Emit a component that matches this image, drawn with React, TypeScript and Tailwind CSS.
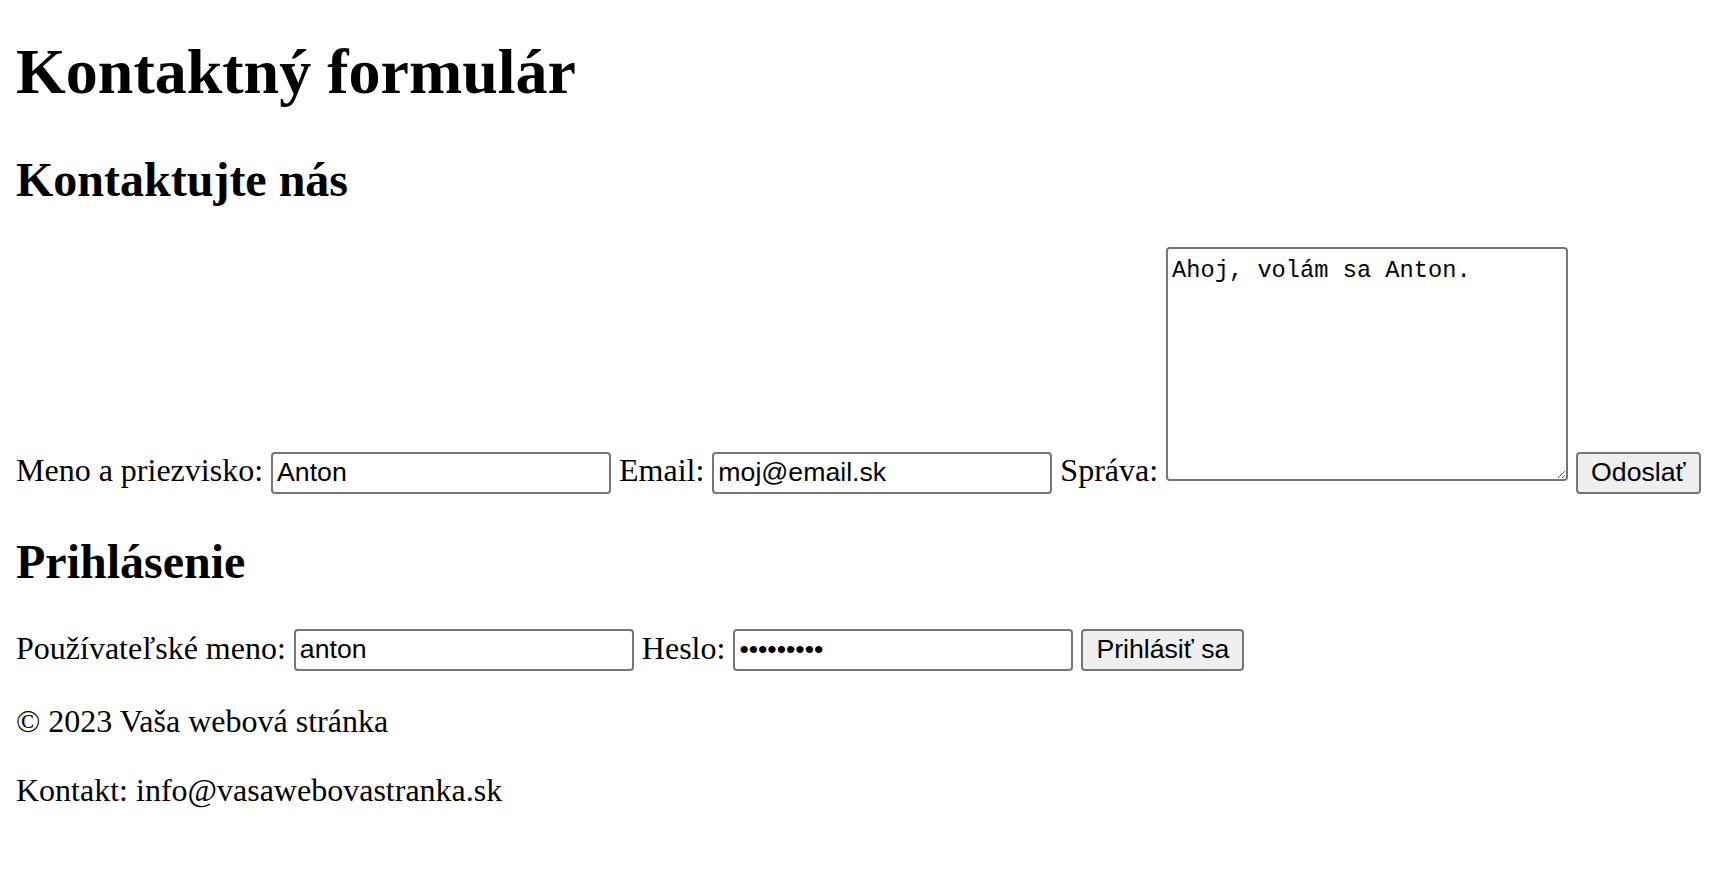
import React from "react";

const inputCls =
  "inline-block align-baseline w-[340px] h-[42px] border-2 border-[#767676] rounded-[4px] bg-white px-[4px] py-[2px] font-['Liberation_Sans',Arial,sans-serif] text-[26.67px] leading-[normal] text-black outline-none";

const btnCls =
  "inline-block align-baseline h-[42px] border-2 border-[#767676] rounded-[4px] bg-[#efefef] px-[13px] py-[2px] font-['Liberation_Sans',Arial,sans-serif] text-[26.67px] leading-[normal] text-black";

export default function App() {
  return (
    <div className="min-h-screen bg-white px-[16px] pb-[32px] font-['Liberation_Serif','Times_New_Roman',serif] text-[32px] leading-[normal] text-black">
      <h1 className="mt-[35px] mb-[43px] text-[64px] font-bold leading-[normal]">Kontaktný formulár</h1>
      <h2 className="mb-[40px] text-[48px] font-bold leading-[normal]">Kontaktujte nás</h2>
      <form onSubmit={(e) => e.preventDefault()}>
        <label htmlFor="meno">Meno a priezvisko:</label>{" "}
        <input id="meno" type="text" defaultValue="Anton" className={inputCls} />{" "}
        <label htmlFor="email">Email:</label>{" "}
        <input id="email" type="email" defaultValue="moj@email.sk" className={inputCls} />{" "}
        <label htmlFor="sprava">Správa:</label>{" "}
        <textarea
          id="sprava"
          defaultValue="Ahoj, volám sa Anton."
          className="inline-block align-baseline w-[402px] h-[234px] resize border-2 border-[#767676] rounded-[4px] bg-white px-[4px] pt-[8px] pb-[4px] font-['Liberation_Mono','DejaVu_Sans_Mono',monospace] text-[23.7px] leading-[normal] text-black outline-none"
        />{" "}
        <button type="submit" className={btnCls}>Odoslať</button>
      </form>
      <h2 className="mt-[40px] mb-[40px] text-[48px] font-bold leading-[normal]">Prihlásenie</h2>
      <form onSubmit={(e) => e.preventDefault()}>
        <label htmlFor="user">Používateľské meno:</label>{" "}
        <input id="user" type="text" defaultValue="anton" className={inputCls} />{" "}
        <label htmlFor="heslo">Heslo:</label>{" "}
        <input id="heslo" type="password" defaultValue="heslo1234" className={inputCls} />{" "}
        <button type="submit" className={btnCls}>Prihlásiť sa</button>
      </form>
      <footer>
        <p className="mt-[32px]">© 2023 Vaša webová stránka</p>
        <p className="mt-[32px]">Kontakt: info@vasawebovastranka.sk</p>
      </footer>
    </div>
  );
}
